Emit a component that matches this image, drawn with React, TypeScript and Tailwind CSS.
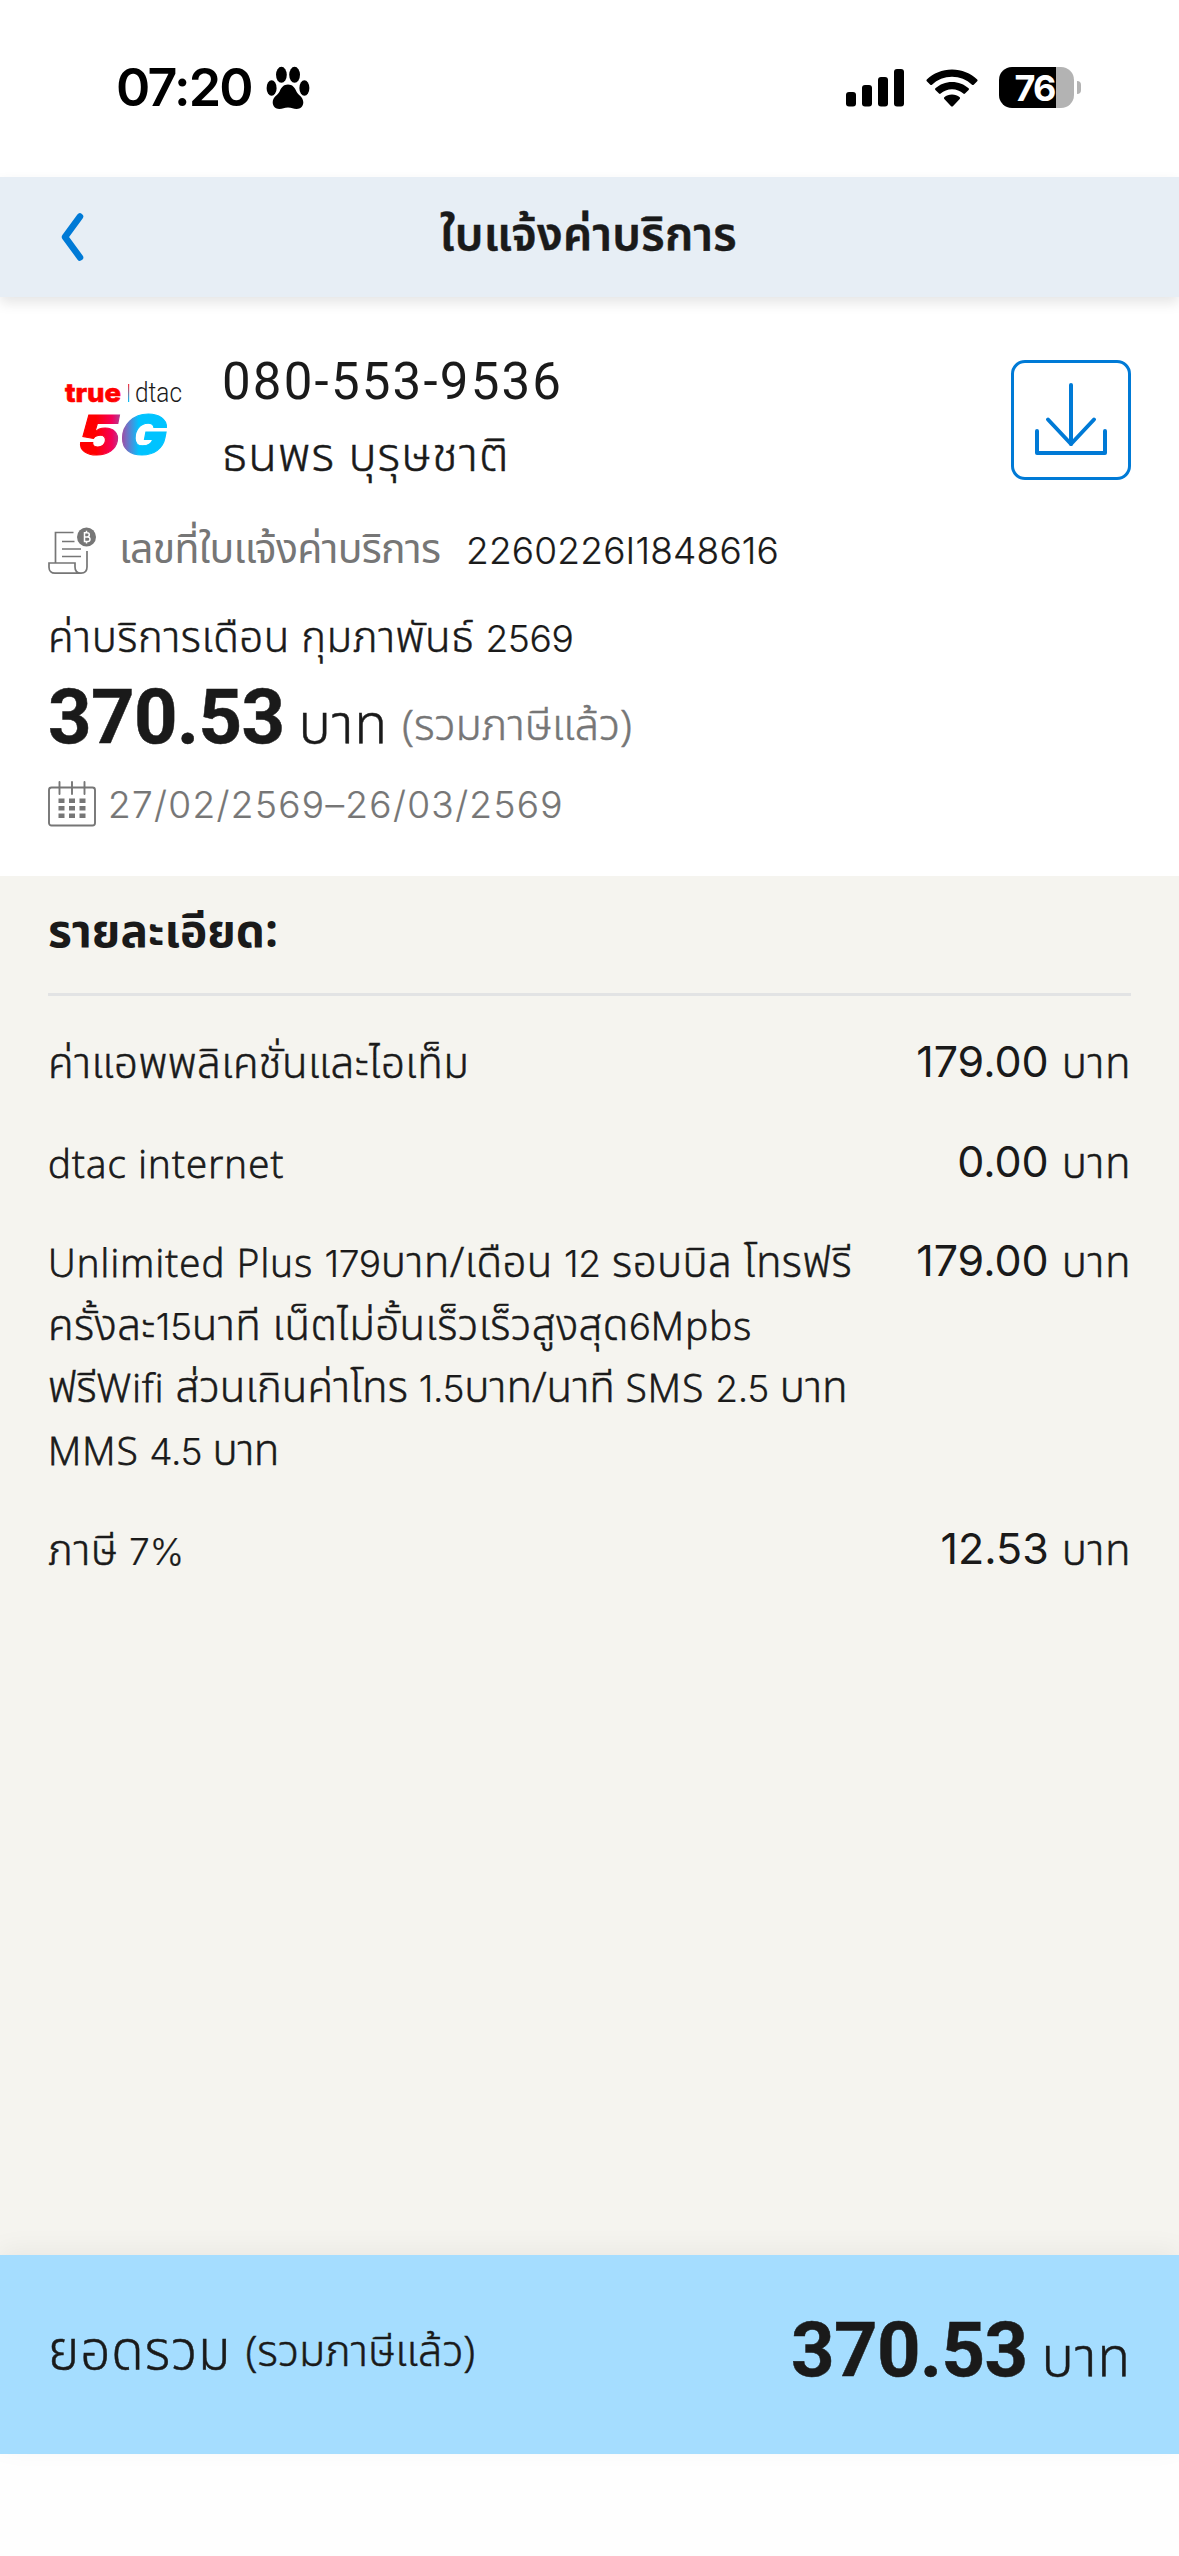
import { Fragment } from "react";
import clsx from "clsx";

interface BillItem {
  lines: string[];
  amount: string;
}

const items: BillItem[] = [
  { lines: ["ค่าแอพพลิเคชั่นและไอเท็ม"], amount: "179.00" },
  { lines: ["dtac internet"], amount: "0.00" },
  {
    lines: [
      "Unlimited Plus 179บาท/เดือน 12 รอบบิล โทรฟรี",
      "ครั้งละ15นาที เน็ตไม่อั้นเร็วเร็วสูงสุด6Mpbs",
      "ฟรีWifi ส่วนเกินค่าโทร 1.5บาท/นาที SMS 2.5 บาท",
      "MMS 4.5 บาท",
    ],
    amount: "179.00",
  },
  { lines: ["ภาษี 7%"], amount: "12.53" },
];

// Latin words and numbers are set slightly smaller than the Thai around them
function Mixed({ text }: { text: string }) {
  return (
    <>
      {text.split(/([A-Za-z]+|[0-9.%]+)/).map((part, i) => {
        if (i % 2 === 0) return <Fragment key={i}>{part}</Fragment>;
        return (
          <span
            key={i}
            className={clsx(
              "leading-none",
              /\d/.test(part)
                ? "font-['Inter'] text-[0.885em] tracking-[-0.01em] [-webkit-text-stroke:0.2px]"
                : "font-['Open_Sans'] text-[0.915em] tracking-[0.03em] [-webkit-text-stroke:0.8px]"
            )}
          >
            {part}
          </span>
        );
      })}
    </>
  );
}

function PawIcon() {
  return (
    <svg viewBox="0 0 44 44" className="h-[44px] w-[44px]" fill="#000">
      <ellipse cx="15.4" cy="8.8" rx="5.4" ry="8" />
      <ellipse cx="28.6" cy="8.8" rx="5.4" ry="8" />
      <ellipse cx="5.6" cy="22" rx="5" ry="7.8" />
      <ellipse cx="38.4" cy="22" rx="5" ry="7.8" />
      <path d="M22 18.500c4.400 0 6.600 2.800 8.300 6.800 1.400 3.600 7 5.600 7 11 0 4.200-3 6.700-6.600 6.700-3.400 0-5-1.500-8.700-1.500S16.700 43 13.300 43c-3.600 0-6.600-2.500-6.600-6.700 0-5.400 5.600-7.400 7-11 1.700-4 3.900-6.800 8.300-6.800z" />
    </svg>
  );
}

function SignalIcon() {
  return (
    <svg viewBox="0 0 58 38" className="h-[38px] w-[58px]" fill="#000">
      <rect x="0" y="23" width="10" height="14.500" rx="3" />
      <rect x="16" y="16" width="10" height="21.500" rx="3" />
      <rect x="32" y="8" width="10" height="29.500" rx="3" />
      <rect x="48" y="0" width="10" height="37.500" rx="3" />
    </svg>
  );
}

function WifiIcon() {
  return (
    <svg viewBox="0 0 52 38" className="h-[38px] w-[52px]" fill="#000">
      <path d="M26 .5c9.800 0 18.600 3.800 25.200 10 .5.5.5 1.200 0 1.700l-3.500 3.500c-.5.5-1.200.5-1.700 0C40.700 10.700 33.600 7.800 26 7.800S11.300 10.700 6 15.700c-.5.5-1.200.5-1.700 0L.8 12.200c-.5-.5-.5-1.200 0-1.700C7.400 4.300 16.200.5 26 .5z" />
      <path d="M26 13c6.400 0 12.200 2.400 16.600 6.300.5.5.5 1.200 0 1.700L39 24.500c-.5.5-1.200.5-1.700.1-3-2.700-7-4.300-11.300-4.300s-8.300 1.600-11.300 4.300c-.5.4-1.200.4-1.700-.1L9.400 21c-.5-.5-.5-1.200 0-1.700C13.800 15.400 19.600 13 26 13z" />
      <path d="M26 25.400c2.900 0 5.600 1 7.700 2.800.5.500.5 1.200 0 1.700l-6.800 7.300c-.5.5-1.300.5-1.800 0l-6.800-7.300c-.5-.5-.5-1.200 0-1.700 2.100-1.800 4.800-2.800 7.700-2.800z" />
    </svg>
  );
}

function Battery() {
  return (
    <div className="flex items-center gap-[3px]">
      <div className="flex h-[41px] w-[75px] items-center justify-center rounded-[13px] bg-[linear-gradient(to_right,#000_57px,#b3b3b3_57px)] pr-[4px] font-['Inter'] text-[36px] leading-none font-bold tracking-[-0.05em] text-white">
        76
      </div>
      <div className="h-[13px] w-[4px] rounded-r-full bg-[#b3b3b3]" />
    </div>
  );
}

function BrandLogo() {
  return (
    <svg viewBox="0 0 130 84" className="h-[84px] w-[130px] overflow-visible">
      <defs>
        <linearGradient id="five-g" x1="0" x2="1" y1="0" y2="0">
          <stop offset="0.2" stopColor="#ff0000" />
          <stop offset="0.38" stopColor="#f5005a" />
          <stop offset="0.54" stopColor="#7a6bc0" />
          <stop offset="0.68" stopColor="#00c3ff" />
        </linearGradient>
        <linearGradient id="divider" x1="0" x2="0" y1="0" y2="1">
          <stop offset="0" stopColor="#ff2d3c" />
          <stop offset="1" stopColor="#00c3ff" />
        </linearGradient>
      </defs>
      <text x="5" y="25.500" textLength="56" lengthAdjust="spacingAndGlyphs" className="font-['Inter'] text-[26px] font-extrabold" fill="#ff0000" stroke="#ff0000" strokeWidth="0.6">
        true
      </text>
      <rect x="68" y="8" width="1.200" height="18" fill="url(#divider)" />
      <text x="75" y="25.500" textLength="47" lengthAdjust="spacingAndGlyphs" className="font-['Roboto'] text-[28px] font-light" fill="#1a1a1a">
        dtac
      </text>
      <text x="18" y="77.500" textLength="89" lengthAdjust="spacingAndGlyphs" className="font-['Inter'] text-[54px] font-black italic" fill="url(#five-g)" stroke="url(#five-g)" strokeWidth="1">
        5G
      </text>
    </svg>
  );
}

function DownloadIcon() {
  return (
    <svg viewBox="0 0 72 74" className="h-[74px] w-[72px]" fill="none" stroke="#007ad6" strokeWidth="4" strokeLinecap="round" strokeLinejoin="round">
      <path d="M36 2v59" />
      <path d="M13 36.500 36 61l23-24.500" />
      <path d="M2 48v22h68V48" />
    </svg>
  );
}

function InvoiceIcon() {
  return (
    <svg viewBox="0 0 48 48" className="h-[48px] w-[48px]" fill="none" stroke="#767676" strokeWidth="1.700">
      <path d="M25.500 5.500H7.500V36" />
      <path d="M14 14.500h12.500M14 22h19M14 29.500h19" />
      <path d="M39 24v16c0 4-2.500 6.200-6 6.200s-6-2.200-6-6.200v-4H1v4.200c0 3.600 2.400 6 6 6h26" />
      <circle cx="38.500" cy="10" r="9.500" fill="#767676" stroke="none" />
      <path d="M36.500 5.700h2.700a2.100 2.100 0 0 1 0 4.200h-2.700zM36.500 9.900h3.200a2.300 2.300 0 0 1 0 4.600h-3.200zM38.500 3.700v2M38.500 14.500v2" stroke="#fff" strokeWidth="1.500" />
    </svg>
  );
}

function CalendarIcon() {
  return (
    <svg viewBox="0 0 48 46" className="h-[46px] w-[48px]" fill="none" stroke="#767676" strokeWidth="1.900">
      <rect x="1" y="6.500" width="46" height="38" rx="2.500" />
      <path d="M11.500 1v12M24 1v12M36.500 1v12" strokeLinecap="round" />
      <g fill="#767676" stroke="none">
        {[17.5, 25, 32.5].map((y) =>
          [10.5, 21, 31.5].map((x) => <rect key={`${x}-${y}`} x={x} y={y} width="6" height="4.500" />)
        )}
      </g>
    </svg>
  );
}

function Total({ className }: { className?: string }) {
  return (
    <div className={clsx("flex h-[90px] items-baseline leading-[90px]", className)}>
      <span className="font-['Roboto'] text-[76px] font-bold tracking-[-0.6px]">370.53</span>
      <span className="ml-[14px] text-[54px] tracking-[0.8px]">บาท</span>
    </div>
  );
}

export default function App() {
  return (
    <div className="flex h-[2556px] w-[1179px] flex-col overflow-hidden bg-white font-['Noto_Sans_Thai','Noto_Sans',sans-serif] font-light whitespace-nowrap text-[#1a1a1a] [-webkit-text-stroke:0.5px]">
      {/* status bar */}
      <div className="flex h-[177px] shrink-0 items-start justify-between pr-[98px] pl-[116px] text-black [-webkit-text-stroke:0]">
        <div className="flex items-start">
          <span className="mt-[57px] w-[150px] font-['Inter'] text-[52px] leading-[62px] font-semibold tracking-[-1.8px]">
            07:20
          </span>
          <div className="mt-[66px]">
            <PawIcon />
          </div>
        </div>
        <div className="flex items-start">
          <div className="mt-[69px]">
            <SignalIcon />
          </div>
          <div className="mt-[69px] ml-[22px]">
            <WifiIcon />
          </div>
          <div className="mt-[67px] ml-[21px]">
            <Battery />
          </div>
        </div>
      </div>

      {/* header */}
      <header className="relative z-10 flex h-[120px] shrink-0 items-center bg-[#e7eef5] px-[60px] shadow-[0_6px_12px_rgba(0,0,0,0.1)]">
        <svg viewBox="0 0 24 50" className="h-[50px] w-6" fill="none" stroke="#007ad6" strokeWidth="6.500" strokeLinecap="round" strokeLinejoin="round">
          <path d="M20 4.500 5 25l15 20.500" />
        </svg>
        <h1 className="flex-1 pr-[26px] pb-[2px] text-center text-[46px] leading-[70px] font-semibold tracking-[0.3px]">
          ใบแจ้งค่าบริการ
        </h1>
      </header>

      {/* bill summary */}
      <section className="flex h-[579px] shrink-0 flex-col px-12 pt-[46px]">
        <div className="flex items-start">
          <div className="mt-[33px] w-[174px] pl-3 [-webkit-text-stroke:0]">
            <BrandLogo />
          </div>
          <div className="flex flex-1 flex-col">
            <span className="font-['Roboto'] text-[51px] leading-[78px] font-normal tracking-[2.2px] [-webkit-text-stroke:0]">
              080-553-9536
            </span>
            <span className="text-[47px] leading-[72px] tracking-[1.1px]">ธนพร บุรุษชาติ</span>
          </div>
          <button className="mt-[17px] flex h-[120px] w-[120px] items-center justify-center rounded-[14px] border-[3px] border-[#007ad6]">
            <DownloadIcon />
          </button>
        </div>

        <div className="mt-[27px] flex items-start leading-[60px]">
          <div className="mt-[7px]">
            <InvoiceIcon />
          </div>
          <span className="ml-[23px] w-[347px] text-[41px] font-normal tracking-[-0.7px] text-[#767676] [-webkit-text-stroke:0]">
            เลขที่ใบแจ้งค่าบริการ
          </span>
          <span className="font-['Inter'] text-[37px] leading-[62px] tracking-[0.2px] [-webkit-text-stroke:0.2px]">2260226I1848616</span>
        </div>

        <div className="mt-[27px] text-[42px] leading-[60px] tracking-[0.5px]">
          <Mixed text="ค่าบริการเดือน กุมภาพันธ์ 2569" />
        </div>

        <div className="mt-[3px] flex h-[90px] items-baseline">
          <Total />
          <span className="relative -top-[3px] ml-[14px] text-[43px] text-[#767676]">(รวมภาษีแล้ว)</span>
        </div>

        <div className="mt-[12px] flex items-start gap-3 text-[#767676]">
          <div className="mt-[7px]">
            <CalendarIcon />
          </div>
          <span className="font-['Inter'] text-[37px] leading-[62px] tracking-[1.35px] [-webkit-text-stroke:0.2px]">
            27/02/2569–26/03/2569
          </span>
        </div>
      </section>

      {/* line items */}
      <section className="flex h-[1379px] shrink-0 flex-col bg-[#f5f4ef] px-12 pt-[22px]">
        <h2 className="text-[46px] leading-[70px] font-bold [-webkit-text-stroke:0]">รายละเอียด:</h2>
        <div className="mt-[25px] h-[3px] bg-[#e2e3e4]" />
        <ul className="mt-[38px] flex flex-col gap-[37px] text-[42px] leading-[62.6px]">
          {items.map((item, i) => (
            <li key={i} className="flex items-start justify-between">
              <div className="flex flex-col">
                {item.lines.map((line, n) => (
                  <span key={line} className={clsx("h-[62.6px]", n < 2 && "tracking-[0.4px]", n === 3 && "tracking-[-0.5px]")}>
                    <Mixed text={line} />
                  </span>
                ))}
              </div>
              <div className="flex h-[62.6px] items-baseline gap-[13px]">
                <span className="relative -top-px font-['Inter'] text-[43px] leading-none font-normal [-webkit-text-stroke:0]">
                  {item.amount}
                </span>
                <span className="tracking-[0.5px]">บาท</span>
              </div>
            </li>
          ))}
        </ul>
      </section>

      {/* grand total */}
      <footer className="relative flex h-[199px] shrink-0 items-center justify-between bg-[#a5ddff] px-12 shadow-[0_-6px_24px_rgba(0,0,0,0.05)]">
        <div className="flex items-baseline gap-[14px] leading-[90px]">
          <span className="text-[53px] tracking-[1px]">ยอดรวม</span>
          <span className="relative -top-[3px] text-[43px]">(รวมภาษีแล้ว)</span>
        </div>
        <Total className="-mt-[10px]" />
      </footer>
      <div className="flex-1 bg-[#fefefe]" />
    </div>
  );
}
